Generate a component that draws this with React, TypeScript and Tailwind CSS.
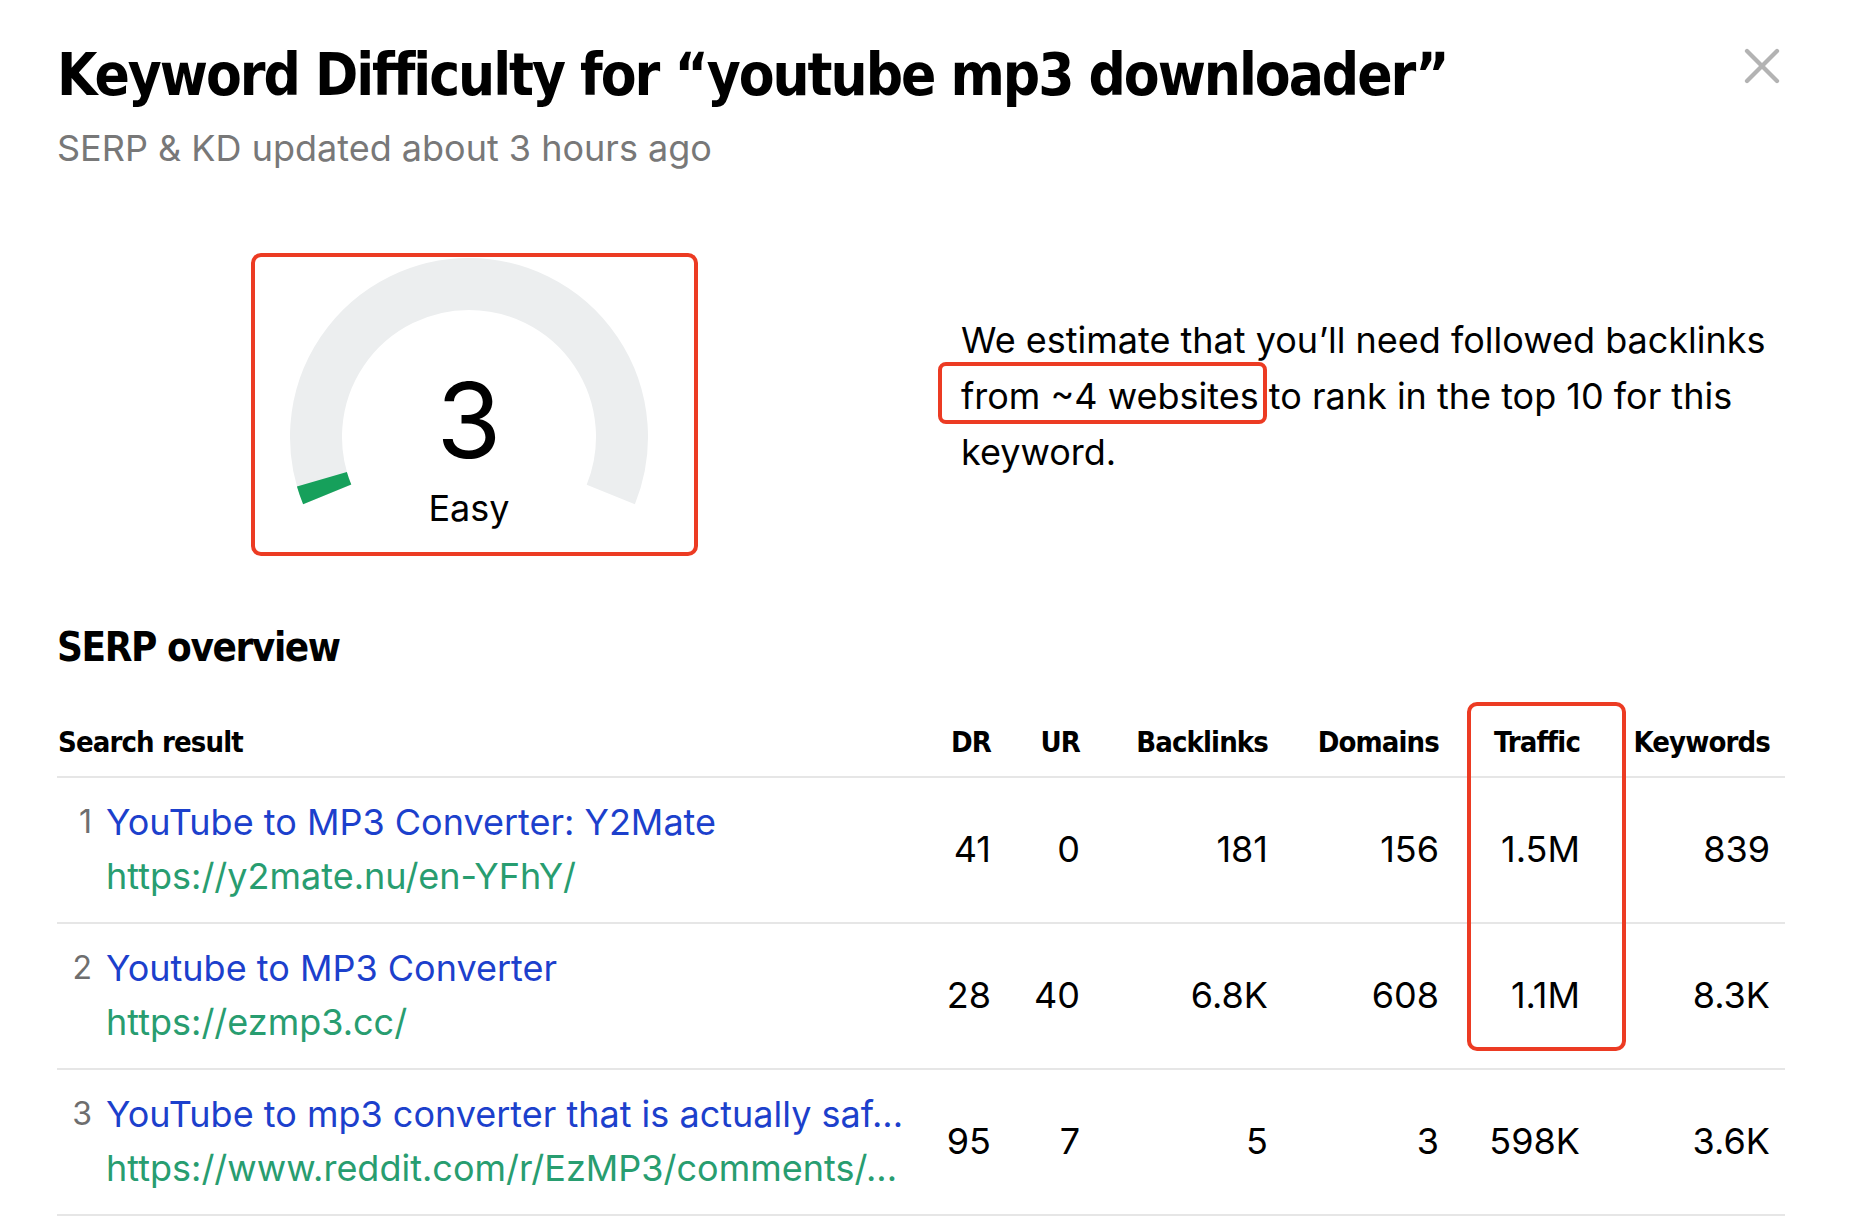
import { X } from 'lucide-react'

const heading = "font-['Liberation_Sans_Narrow','DejaVu_Sans_Condensed','DejaVu_Sans',sans-serif]"
const body = "font-['Inter',sans-serif]"
const cols = 'grid grid-cols-[49px_835px_65px_89px_188px_171px_141px_190px]'

type Row = {
  rank: number
  title: string
  url: string
  dr: string
  ur: string
  backlinks: string
  domains: string
  traffic: string
  keywords: string
}

const rows: Row[] = [
  {
    rank: 1,
    title: 'YouTube to MP3 Converter: Y2Mate',
    url: 'https://y2mate.nu/en-YFhY/',
    dr: '41',
    ur: '0',
    backlinks: '181',
    domains: '156',
    traffic: '1.5M',
    keywords: '839',
  },
  {
    rank: 2,
    title: 'Youtube to MP3 Converter',
    url: 'https://ezmp3.cc/',
    dr: '28',
    ur: '40',
    backlinks: '6.8K',
    domains: '608',
    traffic: '1.1M',
    keywords: '8.3K',
  },
  {
    rank: 3,
    title: 'YouTube to mp3 converter that is actually saf...',
    url: 'https://www.reddit.com/r/EzMP3/comments/...',
    dr: '95',
    ur: '7',
    backlinks: '5',
    domains: '3',
    traffic: '598K',
    keywords: '3.6K',
  },
]

function Gauge() {
  // arc center (218,184) in box coords, midline radius 153
  return (
    <div className="relative h-[303px] w-[447px] rounded-[10px] border-4 border-[#ec3b23]">
      <svg className="absolute -left-[4px] -top-[4px]" width="447" height="303" viewBox="0 0 447 303">
        <path
          d="M 76.2 241.4 A 153 153 0 1 1 359.8 241.4"
          fill="none"
          stroke="#eceeef"
          strokeWidth="52"
        />
        <path d="M 76.2 241.4 A 153 153 0 0 1 70.9 226.2" fill="none" stroke="#16a05b" strokeWidth="52" />
      </svg>
      <div className={`${body} relative flex flex-col items-center pr-[11px] pt-[110px] text-black`}>
        <span className="text-[105px] leading-[105px]">3</span>
        <span className="mt-[14px] text-[36px] leading-[44px]">Easy</span>
      </div>
    </div>
  )
}

export default function App() {
  return (
    <div className={`${body} min-h-[1226px] w-full bg-white pl-[57px] pr-[69px] pt-[45px] text-black`}>
      <div className="flex items-start justify-between">
        <h1 className={`${heading} text-[58px] font-bold leading-[61px] tracking-[-0.035em] text-black`}>
          Keyword Difficulty for “youtube mp3 downloader”
        </h1>
        <button type="button" className="-mr-[7px] -mt-[9px] text-[#b3b3b3]">
          <X className="h-[60px] w-[60px]" strokeWidth={1.7} />
        </button>
      </div>
      <p className="mt-[15px] text-[36px] leading-[54px] text-[#787878]">SERP &amp; KD updated about 3 hours ago</p>

      <div className="mt-[78px] flex">
        <div className="ml-[194px]">
          <Gauge />
        </div>
        <p className="ml-[263px] mt-[59px] text-[36px] leading-[56px] text-black">
          We estimate that you’ll need followed backlinks
          <br />
          <span className="relative">
            from ~4 websites
            <span className="absolute -bottom-[6px] -left-[23px] -right-[8px] -top-[12px] rounded-[8px] border-4 border-[#ec3b23]" />
          </span>{' '}
          to rank in the top 10 for this
          <br />
          keyword.
        </p>
      </div>

      <h2 className={`${heading} mt-[69px] text-[40px] font-bold leading-[44px] tracking-[-0.035em]`}>SERP overview</h2>

      <div className="relative mt-[58px]">
        <div
          className={`${cols} ${heading} border-b-2 border-[#e6e6e6] pb-[18px] text-[29px] font-bold leading-[31px] tracking-[-0.03em]`}
        >
          <div className="col-span-2 pl-[1px]">Search result</div>
          <div className="pr-[15px] text-right">DR</div>
          <div className="pr-[15px] text-right">UR</div>
          <div className="pr-[15px] text-right">Backlinks</div>
          <div className="pr-[15px] text-right">Domains</div>
          <div className="pr-[15px] text-right">Traffic</div>
          <div className="pr-[15px] text-right">Keywords</div>
        </div>

        {rows.map((r) => (
          <div
            key={r.rank}
            className={`${cols} items-center border-b-2 border-[#e6e6e6] pb-[19px] pt-[17px] text-[36px] leading-[54px]`}
          >
            <div className="self-start pr-[14px] text-right text-[32px] leading-[54px] text-[#6e6e6e]">{r.rank}</div>
            <div className="min-w-0">
              <div className="truncate text-[#1c40cc]">{r.title}</div>
              <div className="truncate text-[#289d70]">{r.url}</div>
            </div>
            <div className="pr-[15px] text-right">{r.dr}</div>
            <div className="pr-[15px] text-right">{r.ur}</div>
            <div className="pr-[15px] text-right">{r.backlinks}</div>
            <div className="pr-[15px] text-right">{r.domains}</div>
            <div className="pr-[15px] text-right">{r.traffic}</div>
            <div className="pr-[15px] text-right">{r.keywords}</div>
          </div>
        ))}

        <div className="absolute -top-[25px] left-[1410px] h-[349px] w-[159px] rounded-[10px] border-4 border-[#ec3b23]" />
      </div>
    </div>
  )
}
